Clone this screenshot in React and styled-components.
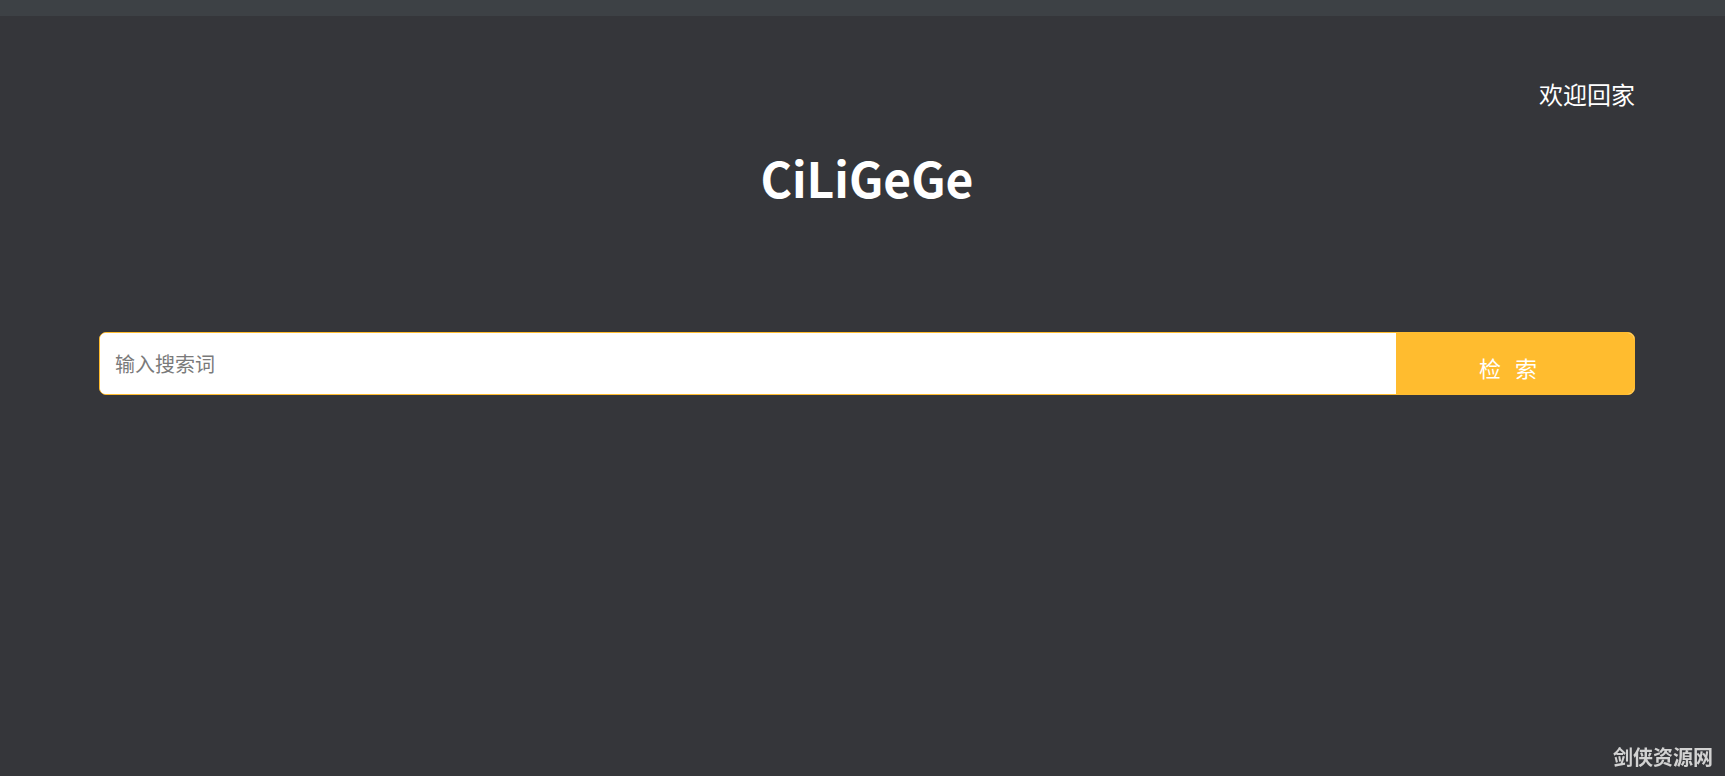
import React, { useState } from "react";
import styled, { createGlobalStyle } from "styled-components";

const GlobalStyle = createGlobalStyle`
  html, body {
    margin: 0;
    padding: 0;
    background: #35363a;
    font-family: "Noto Sans CJK SC", "Noto Sans", sans-serif;
  }
`;

const Page = styled.div`
  min-height: 776px;
  background: #35363a;
  display: flex;
  flex-direction: column;
`;

const TopBar = styled.div`
  height: 16px;
  background: #3d4145;
`;

const Container = styled.div`
  width: 1536px;
  margin: 0 0 0 99px;
  display: flex;
  flex-direction: column;
`;

const Welcome = styled.div`
  align-self: flex-end;
  margin-top: 62px;
  color: #ffffff;
  font-size: 24px;
  line-height: 32px;
`;

const Title = styled.h1`
  margin: 33px 0 0;
  text-align: center;
  color: #ffffff;
  font-size: 48px;
  font-weight: 700;
  line-height: 68px;
`;

const SearchForm = styled.form`
  margin-top: 121px;
  display: flex;
  height: 63px;
  border: 1px solid #ffbc2f;
  border-radius: 7px;
  overflow: hidden;
  box-sizing: border-box;
  background: #fff;
`;

const SearchInput = styled.input`
  flex: 1;
  border: none;
  outline: none;
  padding: 0 15px;
  font-family: inherit;
  font-size: 20px;
  color: #333;
  background: #fff;
  &::placeholder {
    color: #7a7a7a;
  }
`;

const SearchButton = styled.button`
  width: 238px;
  border: none;
  background: #ffbc2f;
  color: #fff;
  font-family: inherit;
  font-size: 22px;
  letter-spacing: 14px;
  padding-top: 8px;
  cursor: pointer;
`;

const Watermark = styled.div`
  position: fixed;
  right: 12px;
  bottom: 6px;
  color: #d2d2d2;
  font-size: 20px;
  font-weight: 700;
  line-height: 26px;
`;

export default function App() {
  const [q, setQ] = useState("");
  return (
    <Page>
      <GlobalStyle />
      <TopBar />
      <Container>
        <Welcome>欢迎回家</Welcome>
        <Title>CiLiGeGe</Title>
        <SearchForm onSubmit={(e) => e.preventDefault()}>
          <SearchInput
            placeholder="输入搜索词"
            value={q}
            onChange={(e) => setQ(e.target.value)}
          />
          <SearchButton type="submit">检索</SearchButton>
        </SearchForm>
      </Container>
      <Watermark>剑侠资源网</Watermark>
    </Page>
  );
}
